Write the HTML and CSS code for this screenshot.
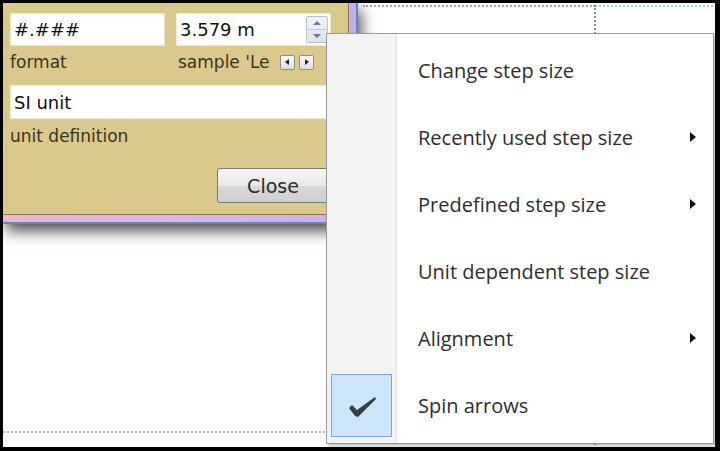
FILE: index.html
```html
<!DOCTYPE html>
<html lang="en">
<head>
    <meta charset="UTF-8">
    <title>Step size menu</title>
    <link rel="stylesheet" href="styles.css">
</head>
<body>
    <div class="frame">
        <div class="desk">
            <div class="guide guide-top"></div>
            <div class="guide guide-top-teal"></div>
            <div class="guide guide-vert"></div>
            <div class="guide guide-bottom"></div>

            <div class="dlg-frame">
                <div class="dialog">
                    <div class="row two">
                        <div class="field">#.###</div>
                        <div class="field spin-field">
                            <span>3.579 m</span>
                            <div class="spin">
                                <span class="up"></span>
                                <span class="down"></span>
                            </div>
                        </div>
                    </div>
                    <div class="row two labels">
                        <div class="label">format</div>
                        <div class="label sample">
                            <span>sample 'Le</span>
                            <span class="nav left"></span>
                            <span class="nav right"></span>
                        </div>
                    </div>
                    <div class="field wide">SI unit</div>
                    <div class="label unit-label">unit definition</div>
                    <div class="actions">
                        <button class="btn">Close</button>
                    </div>
                </div>
            </div>

            <div class="menu">
                <div class="gutter"></div>
                <ul class="items">
                    <li class="item"><span class="icon"></span><span class="text">Change step size</span></li>
                    <li class="item sub"><span class="icon"></span><span class="text">Recently used step size</span></li>
                    <li class="item sub"><span class="icon"></span><span class="text">Predefined step size</span></li>
                    <li class="item"><span class="icon"></span><span class="text">Unit dependent step size</span></li>
                    <li class="item sub"><span class="icon"></span><span class="text">Alignment</span></li>
                    <li class="item">
                        <span class="icon checked">
                            <svg width="34" height="26" viewBox="0 0 34 26">
                                <path d="M4 14 L7 11 L12 16 L30 3 L31 5 L13 23 L10 22 Z" fill="#3a3c3e"/>
                            </svg>
                        </span>
                        <span class="text">Spin arrows</span>
                    </li>
                </ul>
            </div>
        </div>
    </div>
</body>
</html>
```

FILE: styles.css
```css
body {
    margin: 0;
    background: #000;
}
.frame {
    width: 720px;
    height: 451px;
    background: #000;
    padding: 3px 5px 4px 3px;
    box-sizing: border-box;
}
.desk {
    position: relative;
    width: 712px;
    height: 444px;
    background: #fff;
    overflow: hidden;
}

/* guide lines on the canvas */
.guide {
    position: absolute;
}
.guide-top {
    left: 360px;
    top: 2px;
    width: 232px;
    border-top: 2px dotted #a8a8a8;
}
.guide-top-teal {
    left: 592px;
    top: 2px;
    width: 130px;
    border-top: 2px dotted #8fd8c4;
}
.guide-vert {
    left: 591px;
    top: 2px;
    height: 440px;
    border-left: 2px dotted #8c8c8c;
}
.guide-bottom {
    left: 0;
    top: 428px;
    width: 330px;
    border-top: 2px dotted #b4b4b4;
}

/* dialog window */
.dlg-frame {
    position: absolute;
    left: 0;
    top: 0;
    padding: 0 7px 7px 0;
    background: linear-gradient(to right, #ecb8cf, #dcb4e2 60%, #c8aee6);
    border-right: 2px solid #5f86c4;
    border-bottom: 2px solid #5f86c4;
    box-shadow: 3px 7px 14px rgba(0, 0, 0, 0.7);
}
.dialog {
    width: 338px;
    height: 201px;
    padding: 10px 0 0 7px;
    background: #d9c98c;
    border-right: 1px solid #857651;
    border-bottom: 1px solid #857651;
    font-family: "DejaVu Sans", sans-serif;
    font-size: 17px;
}
.row.two {
    display: grid;
    grid-template-columns: 155px 155px;
    column-gap: 11px;
}
.field {
    height: 33px;
    box-sizing: border-box;
    background: #fff;
    border: 1px solid #efe8cc;
    padding: 0 3px;
    display: flex;
    align-items: center;
    font-size: 18px;
    color: #111;
}
.spin-field {
    justify-content: space-between;
    padding-right: 2px;
}
.spin {
    width: 22px;
    height: 27px;
    display: flex;
    flex-direction: column;
    border: 1px solid #b9c1cc;
    border-radius: 2px;
    background: linear-gradient(#f3f5f8, #dde3ea);
    box-sizing: border-box;
}
.spin span {
    flex: 1;
    position: relative;
}
.spin .up {
    border-bottom: 1px solid #c4cad3;
}
.spin .up::after,
.spin .down::after {
    content: "";
    position: absolute;
    left: 6px;
    border-left: 4px solid transparent;
    border-right: 4px solid transparent;
}
.spin .up::after {
    top: 4px;
    border-bottom: 4px solid #6b7a90;
}
.spin .down::after {
    top: 4px;
    border-top: 4px solid #6b7a90;
}
.labels {
    margin-top: 6px;
}
.label {
    height: 20px;
    line-height: 20px;
    color: #3b3618;
}
.sample {
    display: flex;
    align-items: center;
    gap: 4px;
    margin-left: 2px;
}
.sample span:first-child {
    margin-right: 6px;
}
.nav {
    position: relative;
    width: 15px;
    height: 15px;
    box-sizing: border-box;
    border: 1px solid #8e8e8e;
    border-radius: 2px;
    background: linear-gradient(#fafafa, #dedede);
}
.nav::after {
    content: "";
    position: absolute;
    top: 3px;
    border-top: 3px solid transparent;
    border-bottom: 3px solid transparent;
}
.nav.left::after {
    left: 4px;
    border-right: 4px solid #222;
}
.nav.right::after {
    left: 5px;
    border-left: 4px solid #222;
}
.field.wide {
    width: 321px;
    height: 34px;
    margin-top: 13px;
}
.unit-label {
    margin-top: 7px;
}
.actions {
    display: flex;
    justify-content: flex-end;
    margin-top: 22px;
    padding-right: 19px;
}
.btn {
    width: 112px;
    height: 35px;
    font-family: "DejaVu Sans", sans-serif;
    font-size: 19px;
    color: #2c2c2c;
    background: linear-gradient(#f6f6f6, #e8e8e8 50%, #d9d9d9 51%, #cfcfcf);
    border: 1px solid #7a7a6e;
    border-radius: 3px;
    padding: 0;
}

/* context menu */
.menu {
    position: absolute;
    left: 323px;
    top: 30px;
    width: 388px;
    height: 411px;
    box-sizing: border-box;
    background: #fff;
    border: 1px solid #9a9a9a;
    box-shadow: 2px 2px 3px rgba(0, 0, 0, 0.25);
    font-family: "Open Sans", sans-serif;
    font-size: 20px;
    font-weight: 500;
    color: #2e2e2e;
}
.gutter {
    position: absolute;
    left: 0;
    top: 0;
    bottom: 0;
    width: 69px;
    background: #f3f3f3;
    border-right: 1px solid #e2e2e2;
    box-shadow: 1px 0 0 #fff;
}
.items {
    position: relative;
    list-style: none;
    margin: 0;
    padding: 3px 0 0 0;
}
.item {
    height: 67px;
    display: flex;
    align-items: center;
    position: relative;
}
.icon {
    width: 61px;
    height: 63px;
    margin: 0 26px 0 4px;
    box-sizing: border-box;
    display: flex;
    align-items: center;
    justify-content: center;
}
.icon.checked {
    background: #cde5fb;
    border: 1px solid #7ba5d4;
}
.icon svg {
    margin-top: 2px;
}
.sub::after {
    content: "";
    position: absolute;
    left: 363px;
    top: 28px;
    border-top: 5px solid transparent;
    border-bottom: 5px solid transparent;
    border-left: 6px solid #111;
}
```
